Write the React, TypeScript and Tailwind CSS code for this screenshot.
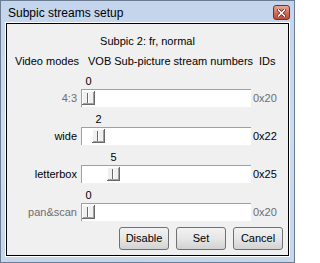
import React from 'react';

type Mode = {
  label: string;
  value: number;
  id: string;
  enabled: boolean;
};

const MODES: Mode[] = [
  { label: '4:3', value: 0, id: '0x20', enabled: false },
  { label: 'wide', value: 2, id: '0x22', enabled: true },
  { label: 'letterbox', value: 5, id: '0x25', enabled: true },
  { label: 'pan&scan', value: 0, id: '0x20', enabled: false },
];

// classic raised trackbar thumb with a centre groove
const Thumb = () => (
  <svg width="13" height="14" viewBox="0 0 13 14" shapeRendering="crispEdges">
    <rect x="0" y="0" width="13" height="14" fill="#f0f0f0" />
    <rect x="0" y="0" width="13" height="1" fill="#ffffff" />
    <rect x="0" y="0" width="1" height="14" fill="#ffffff" />
    <rect x="11" y="1" width="1" height="12" fill="#a0a0a0" />
    <rect x="1" y="12" width="11" height="1" fill="#a0a0a0" />
    <rect x="12" y="0" width="1" height="14" fill="#696969" />
    <rect x="0" y="13" width="13" height="1" fill="#696969" />
    <rect x="5" y="2" width="1" height="10" fill="#696969" />
    <rect x="6" y="2" width="1" height="10" fill="#ffffff" />
  </svg>
);

const CloseButton = () => (
  <div className="w-[17px] h-[15px] rounded-[3px] border border-[#7a2f22] bg-gradient-to-b from-[#e8a898] via-[#d3705c] to-[#c24a35] flex items-center justify-center">
    <svg width="9" height="8" viewBox="0 0 9 8">
      <path d="M1.5 1 L7.5 7 M7.5 1 L1.5 7" stroke="#5a1a10" strokeWidth="3" strokeLinecap="square" />
      <path d="M1.5 1 L7.5 7 M7.5 1 L1.5 7" stroke="#ffffff" strokeWidth="1.6" strokeLinecap="square" />
    </svg>
  </div>
);

const Button = ({ children }: { children: React.ReactNode }) => (
  <button className="w-[50px] h-[23px] rounded-[3px] border border-[#707070] bg-gradient-to-b from-[#f2f2f2] via-[#e6e6e6] to-[#d2d2d2] text-[11px] text-black leading-none">
    {children}
  </button>
);

const SliderRow = ({ mode }: { mode: Mode }) => {
  const offset = mode.value * 5;
  const textColor = mode.enabled ? 'text-black' : 'text-[#6d6d6d]';
  return (
    <div className="flex flex-col mb-[6px]">
      {/* value above thumb */}
      <div className="pl-[75px] h-[13px] leading-[13px]">
        <span className="inline-block w-[13px] text-center" style={{ marginLeft: offset }}>
          {mode.value}
        </span>
      </div>
      <div className="flex items-center mt-[1px] h-[18px]">
        <div className={`w-[70px] text-right ${textColor}`}>{mode.label}</div>
        <div className="ml-[4px] w-[170px] h-[18px] bg-white border-t border-l border-[#a0a0a0] flex items-start">
          <div className="mt-[1px] flex" style={{ marginLeft: offset }}>
            <Thumb />
          </div>
        </div>
        <div className={`ml-[2px] ${textColor}`}>{mode.id}</div>
      </div>
    </div>
  );
};

export default function App() {
  return (
    <div className="w-[295px] h-[263px] border border-[#6c7d92] bg-gradient-to-b from-[#c3d5ec] via-[#cddcef] to-[#c6d7ec] flex flex-col font-['Liberation_Sans',Arial,sans-serif]">
      {/* Title bar */}
      <div className="h-[21px] flex items-center justify-between pl-[7px] pr-[4px] pt-[2px]">
        <span className="text-[12px] text-black">Subpic streams setup</span>
        <CloseButton />
      </div>

      {/* Client area */}
      <div className="flex-1 mx-[4px] mb-[5px] border border-white flex">
        <div className="flex-1 border border-black bg-[#f0f0f0] flex flex-col text-[11px] text-black leading-[13px]">
          <div className="pt-[11px] text-center">Subpic 2: fr, normal</div>

          <div className="flex mt-[7px] pl-[8px]">
            <span className="w-[73px]">Video modes</span>
            <span className="w-[171px]">VOB Sub-picture stream numbers</span>
            <span>IDs</span>
          </div>

          <div className="flex flex-col mt-[7px]">
            {MODES.map((m, i) => (
              <SliderRow key={i} mode={m} />
            ))}
          </div>

          <div className="flex justify-end gap-[7px] pr-[5px]">
            <Button>Disable</Button>
            <Button>Set</Button>
            <Button>Cancel</Button>
          </div>
        </div>
      </div>
    </div>
  );
}
